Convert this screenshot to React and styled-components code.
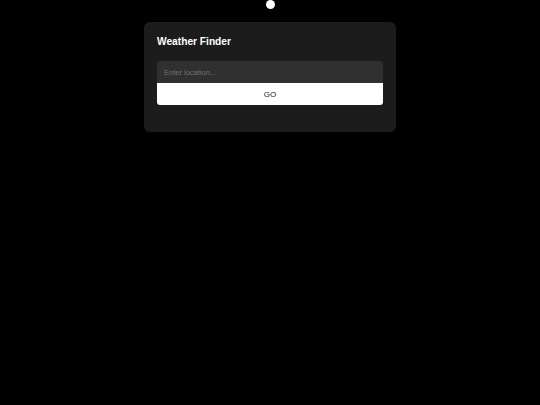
import React, { useState } from "react";
import styled, { createGlobalStyle } from "styled-components";

const GlobalStyle = createGlobalStyle`
  html, body {
    margin: 0;
    padding: 0;
    background: #000;
    font-family: "Liberation Sans", Arial, sans-serif;
  }
`;

const Page = styled.div`
  min-height: 405px;
  display: flex;
  flex-direction: column;
  align-items: center;
`;

const Dot = styled.div`
  width: 9px;
  height: 9px;
  border-radius: 50%;
  background: #fff;
`;

const Card = styled.div`
  margin-top: 13px;
  width: 252px;
  box-sizing: border-box;
  padding: 14px 13px 27px;
  background: #1c1c1c;
  border-radius: 6px;
`;

const Title = styled.h1`
  margin: 0 0 13px;
  font-size: 10.2px;
  line-height: 12px;
  font-weight: bold;
  color: #fff;
`;

const Form = styled.form`
  display: flex;
  flex-direction: column;
`;

const Input = styled.input`
  height: 22px;
  box-sizing: border-box;
  padding: 0 7px;
  border: none;
  outline: none;
  border-radius: 3px 3px 0 0;
  background: #303030;
  color: #ddd;
  font-family: inherit;
  font-size: 7.5px;

  &::placeholder {
    color: #707070;
  }
`;

const Button = styled.button`
  height: 22px;
  border: none;
  border-radius: 0 0 3px 3px;
  background: #fff;
  color: #222;
  font-family: inherit;
  font-size: 8px;
  cursor: pointer;
`;

const App = () => {
  const [location, setLocation] = useState("");

  return (
    <>
      <GlobalStyle />
      <Page>
        <Dot />
        <Card>
          <Title>Weather Finder</Title>
          <Form onSubmit={(e) => e.preventDefault()}>
            <Input
              placeholder="Enter location..."
              value={location}
              onChange={(e) => setLocation(e.target.value)}
            />
            <Button type="submit">GO</Button>
          </Form>
        </Card>
      </Page>
    </>
  );
};

export default App;
